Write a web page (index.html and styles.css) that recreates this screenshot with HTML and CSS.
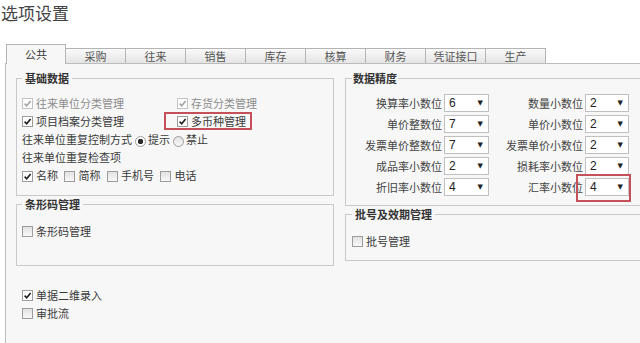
FILE: index.html
```html
<!DOCTYPE html>
<html lang="zh-CN">
<head>
<meta charset="UTF-8">
<meta name="viewport" content="width=device-width, initial-scale=1.0">
<title>选项设置</title>
<link rel="stylesheet" href="styles.css">
</head>
<body>
<h1 class="title">选项设置</h1>

<div class="tabs">
    <div class="tab active">公共</div>
    <div class="tab">采购</div>
    <div class="tab">往来</div>
    <div class="tab">销售</div>
    <div class="tab">库存</div>
    <div class="tab">核算</div>
    <div class="tab">财务</div>
    <div class="tab">凭证接口</div>
    <div class="tab">生产</div>
</div>

<div class="panel">
    <div class="col col-left">
        <fieldset class="group group-base">
            <legend>基础数据</legend>
            <div class="base-grid">
                <label class="item off"><span class="cb on"><svg viewBox="0 0 9 9"><path d="M1.6 4.6 3.7 6.8 7.6 1.9"/></svg></span>往来单位分类管理</label>
                <label class="item off"><span class="cb on"><svg viewBox="0 0 9 9"><path d="M1.6 4.6 3.7 6.8 7.6 1.9"/></svg></span>存货分类管理</label>
                <label class="item"><span class="cb on"><svg viewBox="0 0 9 9"><path d="M1.6 4.6 3.7 6.8 7.6 1.9"/></svg></span>项目档案分类管理</label>
                <label class="item marked"><span class="cb on"><svg viewBox="0 0 9 9"><path d="M1.6 4.6 3.7 6.8 7.6 1.9"/></svg></span>多币种管理<span class="mark mark-cur"></span></label>
            </div>
            <div class="line">往来单位重复控制方式<span class="rb on"></span>提示<span class="rb"></span>禁止</div>
            <div class="line">往来单位重复检查项</div>
            <div class="line">
                <span class="cb on"><svg viewBox="0 0 9 9"><path d="M1.6 4.6 3.7 6.8 7.6 1.9"/></svg></span><span class="opt">名称</span>
                <span class="cb"></span><span class="opt">简称</span>
                <span class="cb"></span><span class="opt">手机号</span>
                <span class="cb"></span><span class="opt">电话</span>
            </div>
        </fieldset>

        <fieldset class="group group-code">
            <legend>条形码管理</legend>
            <label class="item"><span class="cb"></span>条形码管理</label>
        </fieldset>

        <div class="extras">
            <label class="item"><span class="cb on"><svg viewBox="0 0 9 9"><path d="M1.6 4.6 3.7 6.8 7.6 1.9"/></svg></span>单据二维录入</label>
            <label class="item"><span class="cb"></span>审批流</label>
        </div>
    </div>

    <div class="col col-right">
        <fieldset class="group group-prec">
            <legend>数据精度</legend>
            <div class="prec-grid">
                <span class="plabel">换算率小数位</span><span class="sel">6<i>▼</i></span>
                <span class="plabel">数量小数位</span><span class="sel">2<i>▼</i></span>
                <span class="plabel">单价整数位</span><span class="sel">7<i>▼</i></span>
                <span class="plabel">单价小数位</span><span class="sel">2<i>▼</i></span>
                <span class="plabel">发票单价整数位</span><span class="sel">7<i>▼</i></span>
                <span class="plabel">发票单价小数位</span><span class="sel">2<i>▼</i></span>
                <span class="plabel">成品率小数位</span><span class="sel">2<i>▼</i></span>
                <span class="plabel">损耗率小数位</span><span class="sel">2<i>▼</i></span>
                <span class="plabel">折旧率小数位</span><span class="sel">4<i>▼</i></span>
                <span class="plabel">汇率小数位</span><span class="sel marked">4<i>▼</i><span class="mark mark-rate"></span></span>
            </div>
        </fieldset>

        <fieldset class="group group-batch">
            <legend>批号及效期管理</legend>
            <label class="item"><span class="cb"></span>批号管理</label>
        </fieldset>
    </div>
</div>
</body>
</html>
```

FILE: styles.css
```css
body {
    margin: 0;
    width: 640px;
    height: 343px;
    overflow: hidden;
    background-color: #fff;
    font-family: "Noto Sans CJK SC", "Liberation Sans", sans-serif;
    font-size: 11px;
    color: #3a3a3a;
}

.title {
    margin: 0;
    padding: 3px 0 0 1px;
    font-size: 17px;
    line-height: 20px;
    font-weight: normal;
    color: #444;
}

/* tab strip */
.tabs {
    display: flex;
    align-items: flex-end;
    margin: 21px 0 0 6px;
}

.tab {
    width: 60px;
    height: 15px;
    box-sizing: border-box;
    border: 1px solid #b4b4b4;
    border-bottom: none;
    border-left: none;
    background: linear-gradient(#fafafa, #e5e5e5);
    text-align: center;
    line-height: 14px;
    color: #555;
}

.tab.active {
    position: relative;
    z-index: 1;
    height: 20px;
    margin-bottom: -1px;
    border-left: 1px solid #b4b4b4;
    background: #f7f7f7;
    line-height: 19px;
    color: #3a3a3a;
}

/* tab body */
.panel {
    display: flex;
    gap: 11px;
    box-sizing: border-box;
    width: 635px;
    height: 280px;
    margin-left: 5px;
    padding: 7px 0 0 10px;
    border: 1px solid #bcbcbc;
    border-right: none;
    border-bottom: none;
    background-color: #f7f7f7;
}

.col-left {
    width: 318px;
    flex-shrink: 0;
}

.col-right {
    flex: 1;
    min-width: 0;
}

.group {
    margin: 0;
    border: 1px solid #c9c9c9;
    min-width: 0;
}

.col-right .group {
    border-right: none;
}

.group legend {
    padding: 0 3px;
    font-weight: bold;
    line-height: 14px;
    color: #333;
}

.group-base {
    padding: 9px 5px 11px 5px;
}

.group-code {
    margin-top: 1px;
    padding: 11px 5px 25px 5px;
}

.group-prec {
    padding: 7px 0 8px 6px;
}

.group-prec legend {
    padding: 0 1px;
}

.group-batch {
    margin-top: 1px;
    padding: 11px 0 10px 6px;
}

/* checkboxes and radios */
.item {
    display: flex;
    align-items: center;
    gap: 3px;
    height: 18px;
    justify-self: start;
}

.item.off {
    color: #8c8c8c;
}

.cb {
    display: inline-block;
    width: 11px;
    height: 11px;
    box-sizing: border-box;
    border: 1px solid #9c9c9c;
    background: linear-gradient(#e2e2e2, #f8f8f8);
    vertical-align: middle;
    flex-shrink: 0;
}

.cb svg {
    display: block;
    width: 9px;
    height: 9px;
}

.cb path {
    fill: none;
    stroke: #1f1f1f;
    stroke-width: 1.6;
}

.cb.on {
    background: #fff;
}

.off .cb {
    border-color: #c3c3c3;
}

.off .cb path {
    stroke: #a4a4a4;
}

.rb {
    display: inline-block;
    width: 11px;
    height: 11px;
    box-sizing: border-box;
    margin: 0 2px 0 3px;
    border: 1px solid #9c9c9c;
    border-radius: 50%;
    background: linear-gradient(#e2e2e2, #f8f8f8);
    vertical-align: middle;
}

.rb.on {
    background: radial-gradient(circle, #2a2a2a 0 2.5px, #fff 3px);
}

.base-grid {
    display: grid;
    grid-template-columns: 155px auto;
}

.line {
    height: 18px;
    line-height: 18px;
    white-space: nowrap;
}

.line .cb {
    margin-top: -2px;
}

.opt {
    margin: 0 4px 0 3px;
}

.extras {
    margin-top: 20px;
    padding-left: 6px;
}

/* precision selects */
.prec-grid {
    display: grid;
    grid-template-columns: 90px 45px 92px 44px;
    grid-auto-rows: 21px;
    column-gap: 2px;
    align-items: center;
}

.plabel {
    text-align: right;
    color: #444;
    white-space: nowrap;
}

.sel {
    display: flex;
    justify-content: space-between;
    align-items: center;
    height: 18px;
    box-sizing: border-box;
    padding: 0 5px 0 4px;
    border: 1px solid #c0c0c0;
    background-color: #fff;
    font-family: "Liberation Sans", sans-serif;
    font-size: 12px;
    color: #222;
}

.sel i {
    font-style: normal;
    font-family: "DejaVu Sans", sans-serif;
    font-size: 7px;
}

/* red highlight frames */
.marked {
    position: relative;
}

.mark {
    position: absolute;
    border: 2px solid #c4505a;
}

.mark-cur {
    left: -13px;
    right: -6px;
    top: 0;
    bottom: 0;
}

.mark-rate {
    left: -10px;
    right: -3px;
    top: -5px;
    bottom: -7px;
}
```
